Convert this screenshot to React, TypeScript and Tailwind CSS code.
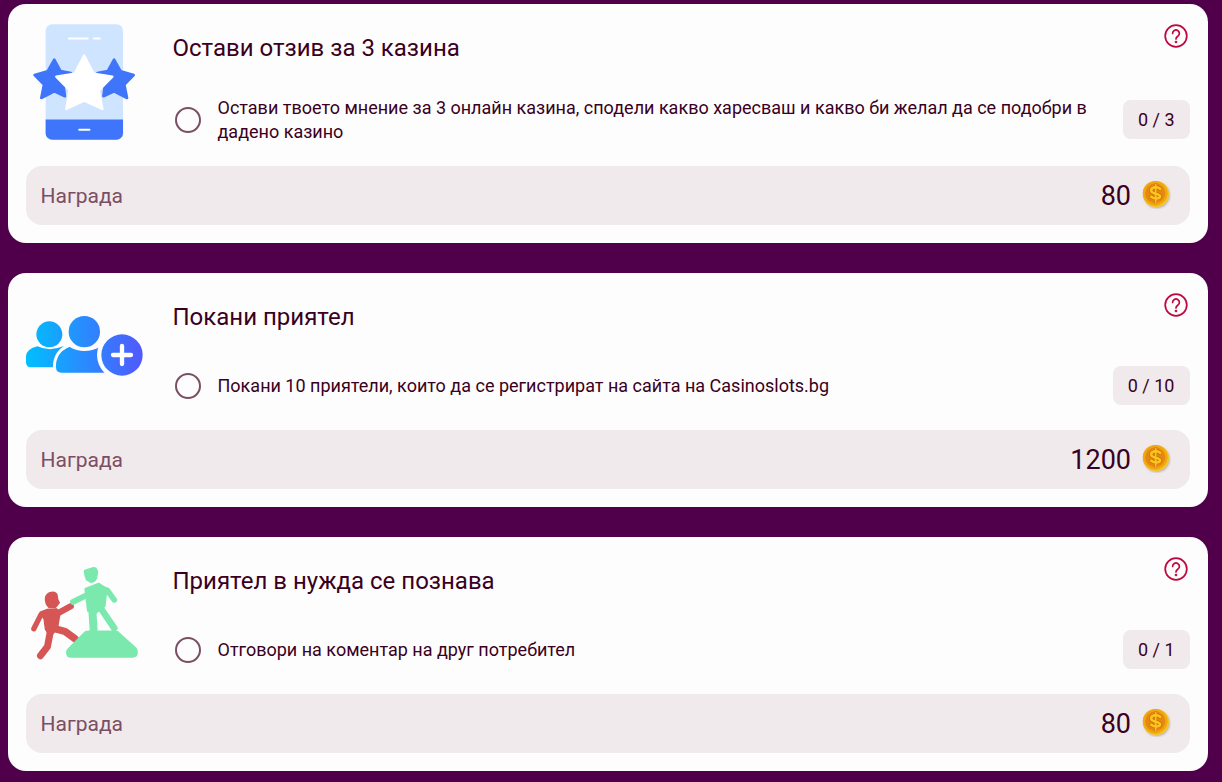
import type { ReactNode } from "react";

const Coin = () => (
  <svg className="mt-[-5px] h-[30px] w-[30px]" viewBox="0 0 30 30">
    <defs>
      <filter id="cs" x="-20%" y="-20%" width="140%" height="140%">
        <feGaussianBlur stdDeviation="0.8" />
      </filter>
    </defs>
    <circle cx="15.800" cy="16.200" r="13" fill="#8a7a60" opacity=".5" filter="url(#cs)" />
    <circle cx="15" cy="15" r="13" fill="#f6c91c" />
    <circle cx="14.200" cy="14.300" r="12.400" fill="#f2a60f" />
    <circle cx="14.200" cy="14.300" r="10" fill="#e4880f" />
    <g fill="none" strokeLinecap="round">
      <path d="M19.200 9.800c-1.100-1-2.700-1.500-4.400-1.500-2.700 0-4.600 1.300-4.600 3.300 0 4.400 8.800 2.300 8.800 5.600 0 1.300-1.500 2.200-3.800 2.200-1.900 0-3.700-.7-5-1.700" stroke="#c9690c" strokeWidth="3.700" />
      <path d="M14.700 5.800v17.200" stroke="#c9690c" strokeWidth="2.800" />
      <path d="M19.200 9.800c-1.100-1-2.700-1.500-4.400-1.500-2.700 0-4.600 1.300-4.600 3.300 0 4.400 8.800 2.300 8.800 5.600 0 1.300-1.500 2.200-3.800 2.200-1.900 0-3.700-.7-5-1.700" stroke="#fbc61c" strokeWidth="2.600" />
      <path d="M14.700 5.800v17.200" stroke="#fbc61c" strokeWidth="1.800" />
    </g>
  </svg>
);

const PhoneIcon = () => (
  <svg className="mt-[20px] ml-[7px] h-[116px] w-[103px]" viewBox="99 73 310 348">
    <rect x="137" y="73" width="233" height="348" rx="20" fill="#cfe4fe" />
    <path d="M137 360h233v41a20 20 0 0 1-20 20H157a20 20 0 0 1-20-20Z" fill="#3f75fb" />
    <path d="M207 116h57M282 116h18M238 391h31" stroke="#fff" strokeWidth="6" strokeLinecap="round" />
    <path d="M163 180 182 214 213 220 190 250 195 290 163 275 124 295 132 255 104 226 143 215Z" fill="#3f75fb" stroke="#3f75fb" strokeWidth="8" strokeLinejoin="round" />
    <path d="M343 180 324 214 293 220 316 250 311 290 343 275 382 295 374 255 402 226 363 215Z" fill="#3f75fb" stroke="#3f75fb" strokeWidth="8" strokeLinejoin="round" />
    <path d="M253 167 282 222 338 231 297 272 308 328 253 303 199 328 209 272 169 231 224 222Z" fill="#fff" stroke="#fff" strokeWidth="7" strokeLinejoin="round" />
  </svg>
);

const FriendsIcon = () => (
  <svg className="mt-[43px] h-[60px] w-[117px]" viewBox="78 78 351 180">
    <defs>
      <linearGradient id="fg" gradientUnits="userSpaceOnUse" x1="78" x2="428" y1="0" y2="0">
        <stop offset="0" stopColor="#00bfff" />
        <stop offset="1" stopColor="#5258fd" />
      </linearGradient>
    </defs>
    <path d="M78 215V198Q80 177 112 169Q148 186 190 169L190 232H93Q78 232 78 215Z" fill="url(#fg)" />
    <circle cx="148" cy="133" r="39" fill="url(#fg)" />
    <path d="M168 232Q168 187 208 170Q253 196 300 170L330 190V248H184Q168 248 168 232Z" fill="url(#fg)" />
    <path d="M163 233Q163 183 207 166" fill="none" stroke="#fdfdfd" strokeWidth="9" />
    <circle cx="253" cy="125" r="54" fill="#fdfdfd" />
    <circle cx="253" cy="125" r="47" fill="url(#fg)" />
    <circle cx="366" cy="195" r="75" fill="#fdfdfd" />
    <circle cx="366" cy="195" r="62" fill="url(#fg)" />
    <path d="M366 168v54M339 195h54" stroke="#fff" strokeWidth="13" strokeLinecap="round" />
  </svg>
);

const ClimbIcon = () => (
  <svg className="mt-[26px] h-[98px] w-[115px]" viewBox="78 40 345 295">
    <g fill="none" stroke="#d65656" strokeLinecap="round" strokeLinejoin="round">
      <path d="M168 194 212 170" strokeWidth="19" />
      <path d="M122 196 101 238" strokeWidth="16" />
      <path d="M165 238 195 246 225 268" strokeWidth="22" />
      <path d="M150 250 142 292 121 319" strokeWidth="21" />
    </g>
    <path d="M120 188 140 180 170 178 180 190 172 238 150 262 136 240 132 210Z" fill="#d65656" stroke="#d65656" strokeWidth="4" strokeLinejoin="round" />
    <path d="M134 147Q136 127 158 126Q170 127 173 136L175 150 180 160 172 170 166 176H146Q133 165 134 147Z" fill="#d65656" />
    <path d="M198 310Q198 300 205 295L250 250Q255 243 265 243H345Q355 243 360 250L410 295Q415 300 414 312Q412 325 400 325H212Q198 325 198 310Z" fill="#7be9ae" />
    <g fill="none" stroke="#7be9ae" strokeLinecap="round" strokeLinejoin="round">
      <path d="M219 157 262 136" strokeWidth="18" />
      <path d="M300 116 322 122 343 151" strokeWidth="17" />
      <path d="M277 180 281 242" strokeWidth="24" />
      <path d="M305 180 343 236" strokeWidth="20" />
    </g>
    <path d="M256 118 296 102 320 118 314 170 285 192 264 184Z" fill="#7be9ae" stroke="#7be9ae" strokeWidth="6" strokeLinejoin="round" />
    <path d="M251 64Q252 60 258 59L280 52Q293 52 295 68L291 88Q285 100 272 100L258 92Q252 78 251 64Z" fill="#7be9ae" />
  </svg>
);

const Card = ({ icon, title, desc, progress, reward, tall }: { icon: ReactNode; title: string; desc: string; progress: string; reward: string; tall?: boolean }) => (
  <div className="relative mb-[30px] ml-2 w-[1200px] rounded-[18px] bg-[#fdfdfd] px-[18px] pb-[18px]">
    <div className="flex">
      <div className="flex w-[147px] shrink-0 items-start">{icon}</div>
      <div className="flex-1">
        <h2 className="mt-[28px] -ml-[0.5px] text-[24px] leading-[32px] font-normal text-[#3a0021]">{title}</h2>
        <div className={`flex items-center ${tall ? "mt-[32px]" : "mt-[33px]"}`}>
          <span className="ml-[2px] h-[26px] w-[26px] shrink-0 rounded-full border-[2.5px] border-[#7b4f63]" />
          <p className="ml-[16.5px] flex-1 pr-6 text-[18px] leading-[24px] text-[#3a0021]">{desc}</p>
          <span className={`flex h-[39px] items-center rounded-[8px] bg-[#f0eaed] pr-[15.5px] pl-[15px] text-[18px] text-[#3a0021] ${tall ? "mb-[2px]" : ""}`}>{progress}</span>
        </div>
      </div>
    </div>
    <div className={`${tall ? "mt-[22px]" : "mt-[25px]"} flex h-[59px] items-center justify-between rounded-[16px] bg-[#f0eaed] pt-[2px] pr-[19px] pl-[14.5px]`}>
      <span className="text-[21px] text-[#7b4f63]">Награда</span>
      <span className="flex items-center gap-[10px] text-[27px] text-[#3a0021]">
        {reward}
        <Coin />
      </span>
    </div>
    <svg className="absolute top-[20px] right-[20.5px] h-[24px] w-[24px]" viewBox="0 0 24 24" fill="none" stroke="#c0063f" strokeWidth="1.700" strokeLinecap="round">
      <circle cx="12" cy="12" r="10.800" />
      <path d="M8.600 9.400a3.400 3.400 0 1 1 5.200 2.900c-1.200.8-1.800 1.400-1.800 2.700" />
      <circle cx="12" cy="18" r=".5" />
    </svg>
  </div>
);

export default function App() {
  return (
    <div className="h-[782px] overflow-hidden bg-[#50004a] pt-[4px] font-['Roboto',sans-serif]">
      <Card tall icon={<PhoneIcon />} title="Остави отзив за 3 казина" desc="Остави твоето мнение за 3 онлайн казина, сподели какво харесваш и какво би желал да се подобри в дадено казино" progress="0 / 3" reward="80" />
      <Card icon={<FriendsIcon />} title="Покани приятел" desc="Покани 10 приятели, които да се регистрират на сайта на Casinoslots.bg" progress="0 / 10" reward="1200" />
      <Card icon={<ClimbIcon />} title="Приятел в нужда се познава" desc="Отговори на коментар на друг потребител" progress="0 / 1" reward="80" />
    </div>
  );
}
